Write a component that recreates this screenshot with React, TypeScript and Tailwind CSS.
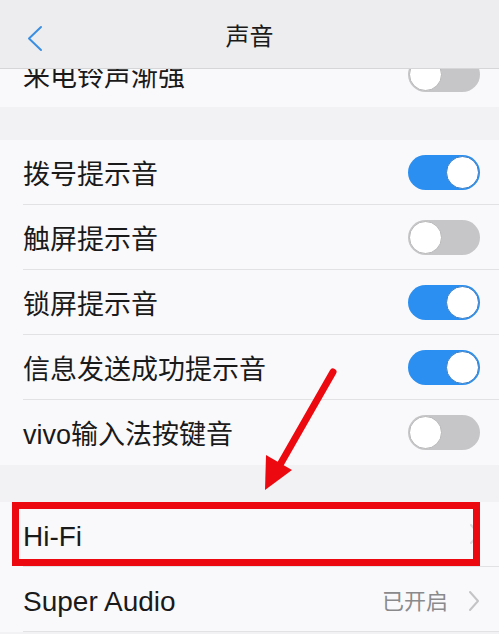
import React from 'react';

type ToggleRow = { id: string; label: string; on: boolean };

const font = { fontFamily: '"Liberation Sans", "Noto Sans CJK SC", sans-serif' };

const Toggle: React.FC<{ on: boolean }> = ({ on }) => (
  <div
    className={`w-[72px] h-[35px] rounded-full flex items-center p-px ${
      on ? 'bg-[#2a8ff0] justify-end' : 'bg-[#c6c6c8] justify-start'
    }`}
  >
    <div
      className={`w-[33px] h-[33px] rounded-full bg-white border ${
        on ? 'border-[#3a7fc8]' : 'border-[#b8b8ba]'
      }`}
    />
  </div>
);

const Chevron: React.FC<{ color: string }> = ({ color }) => (
  <svg width="12" height="22" viewBox="0 0 12 22" fill="none">
    <path d="M2 2l8 9-8 9" stroke={color} strokeWidth="2" strokeLinecap="round" strokeLinejoin="round" />
  </svg>
);

const Row: React.FC<{ children: React.ReactNode; last?: boolean }> = ({ children, last }) => (
  <div className="relative bg-[#f9f9fb] pl-[23px]">
    <div
      className={`h-[65px] flex items-center justify-between pr-[19px] ${
        last ? '' : 'border-b border-[#e2e2e4]'
      }`}
    >
      {children}
    </div>
  </div>
);

const Label: React.FC<{ children: React.ReactNode; latin?: boolean }> = ({ children, latin }) => (
  <span className={`${latin ? 'text-[28px]' : 'text-[27px]'} text-[#1a1a1a] mt-[6px]`}>{children}</span>
);

export default function App() {
  const toggles: ToggleRow[] = [
    { id: 'dial', label: '拨号提示音', on: true },
    { id: 'touch', label: '触屏提示音', on: false },
    { id: 'lock', label: '锁屏提示音', on: true },
    { id: 'msg', label: '信息发送成功提示音', on: true },
    { id: 'ime', label: 'vivo输入法按键音', on: false },
  ];

  return (
    <div className="relative w-[499px] h-[634px] bg-[#f2f2f4] overflow-hidden flex flex-col" style={font}>
      {/* 顶部导航栏 */}
      <div className="relative z-10 h-[69px] shrink-0 bg-[#ededef] border-b border-[#d6d6d8] flex items-center justify-center">
        <svg className="absolute left-[26px] top-[25px]" width="18" height="27" viewBox="0 0 18 27" fill="none">
          <path d="M15 2L3 13.5 15 25" stroke="#3b8fe2" strokeWidth="2" strokeLinecap="round" strokeLinejoin="round" />
        </svg>
        <span className="text-[24px] text-[#1a1a1a] leading-none mt-[6px]">声音</span>
      </div>

      <div className="flex-1 overflow-hidden">
        <div className="-mt-[27px]">
          <Row last>
            <Label>来电铃声渐强</Label>
            <Toggle on={false} />
          </Row>

          <div className="h-[33px]" />

          {toggles.map((t, i) => (
            <Row key={t.id} last={i === toggles.length - 1}>
              <Label>{t.label}</Label>
              <Toggle on={t.on} />
            </Row>
          ))}

          <div className="h-[37px]" />

          <Row>
            <Label latin>Hi-Fi</Label>
            <span className="mr-[-1px] opacity-60">
              <Chevron color="#c8c8ca" />
            </span>
            {/* 红色标注框 */}
            <div className="absolute left-[12px] top-0 w-[468px] h-[64px] border-[7px] border-[#ec0a10]" />
          </Row>

          <Row>
            <Label latin>Super Audio</Label>
            <span className="flex items-center gap-[20px] mt-[4px]">
              <span className="text-[22px] text-[#8a8a8c]">已开启</span>
              <Chevron color="#c4c4c6" />
            </span>
          </Row>
        </div>
      </div>

      {/* 指向 Hi-Fi 的箭头 */}
      <svg className="absolute left-0 top-0 pointer-events-none" width="499" height="634" viewBox="0 0 499 634">
        <path d="M333 372L281 463" stroke="#ec0a10" strokeWidth="7" strokeLinecap="round" />
        <path d="M265 490L266 455L292 470Z" fill="#ec0a10" />
      </svg>
    </div>
  );
}
